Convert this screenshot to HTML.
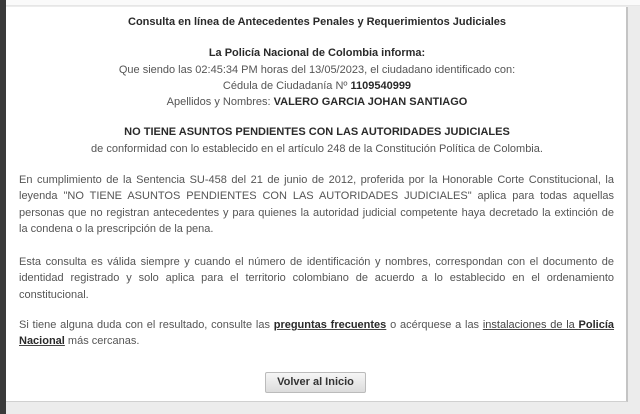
<!DOCTYPE html>
<html><head><meta charset="utf-8"><style>
*{margin:0;padding:0;box-sizing:border-box}
body{width:640px;height:414px;overflow:hidden;background:#ececec;font-family:"Liberation Sans",Arial,sans-serif;font-size:11px;color:#555;position:relative}
#strip{position:absolute;left:0;top:0;width:6px;height:414px;background:#3a3a3a}
#top{position:absolute;left:6px;top:0;width:634px;height:6px;background:#fafafa;border-bottom:1px solid #e6e6e6}
#panel{position:absolute;left:6px;top:7px;width:622px;height:395px;background:#fff;border-right:2px solid #c4c4c4;border-bottom:1px solid #d0d0d0}
.l{position:absolute;left:0;width:622px;text-align:center;white-space:nowrap;line-height:14px}
.p{position:absolute;left:13px;width:595px;line-height:16.3px}
.p div{text-align:justify;text-align-last:justify;white-space:nowrap}
.p div.e{text-align-last:left}
b{color:#2a2a2a}
u{color:#444}
#btn{position:absolute;left:259px;top:365px;width:101px;height:21px;border:1px solid #bbb;border-radius:2px;background:linear-gradient(#f6f6f6,#dcdcdc);font-weight:bold;color:#333;font-size:11px;text-align:center;line-height:19px}
</style></head><body>
<div id="strip"></div><div id="top"></div>
<div id="panel">
<div class="l" style="top:8px"><b>Consulta en línea de Antecedentes Penales y Requerimientos Judiciales</b></div>
<div class="l" style="top:39px"><b>La Policía Nacional de Colombia informa:</b></div>
<div class="l" style="top:56px">Que siendo las 02:45:34 PM horas del 13/05/2023, el ciudadano identificado con:</div>
<div class="l" style="top:72px">Cédula de Ciudadanía Nº <b>1109540999</b></div>
<div class="l" style="top:88px">Apellidos y Nombres: <b>VALERO GARCIA JOHAN SANTIAGO</b></div>
<div class="l" style="top:118px"><b>NO TIENE ASUNTOS PENDIENTES CON LAS AUTORIDADES JUDICIALES</b></div>
<div class="l" style="top:135px">de conformidad con lo establecido en el artículo 248 de la Constitución Política de Colombia.</div>
<div class="p" style="top:165px">
<div>En cumplimiento de la Sentencia SU-458 del 21 de junio de 2012, proferida por la Honorable Corte Constitucional, la</div>
<div>leyenda "NO TIENE ASUNTOS PENDIENTES CON LAS AUTORIDADES JUDICIALES" aplica para todas aquellas</div>
<div>personas que no registran antecedentes y para quienes la autoridad judicial competente haya decretado la extinción de</div>
<div class="e">la condena o la prescripción de la pena.</div>
</div>
<div class="p" style="top:247px">
<div>Esta consulta es válida siempre y cuando el número de identificación y nombres, correspondan con el documento de</div>
<div>identidad registrado y solo aplica para el territorio colombiano de acuerdo a lo establecido en el ordenamiento</div>
<div class="e">constitucional.</div>
</div>
<div class="p" style="top:310px">
<div>Si tiene alguna duda con el resultado, consulte las <u><b>preguntas frecuentes</b></u> o acérquese a las <u>instalaciones de la <b>Policía</b></u></div>
<div class="e"><u><b>Nacional</b></u> más cercanas.</div>
</div>
<div id="btn">Volver al Inicio</div>
</div>
</body></html>
